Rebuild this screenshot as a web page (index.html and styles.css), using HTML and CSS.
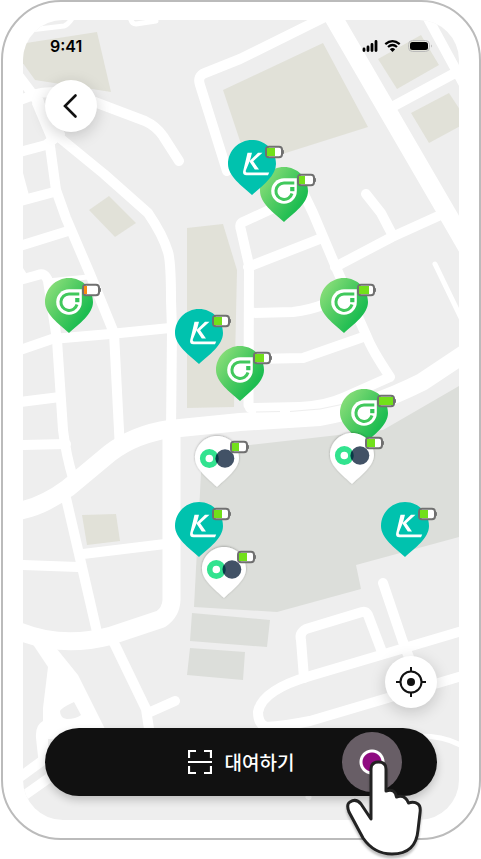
FILE: index.html
```html
<!DOCTYPE html>
<html lang="ko">
<head>
<meta charset="utf-8">
<meta name="viewport" content="width=device-width, initial-scale=1">
<title>대여하기</title>
<link rel="stylesheet" href="styles.css">
</head>
<body>
<main class="stage">
  <div class="phone">
    <div class="screen">
      <svg class="map" viewBox="23 20 436 800" preserveAspectRatio="xMidYMid slice" aria-hidden="true">
        <defs>
          <linearGradient id="leaf" x1="0.1" y1="0.15" x2="0.8" y2="0.7">
            <stop offset="0" stop-color="#86dd78"/>
            <stop offset="0.5" stop-color="#50cb62"/>
            <stop offset="1" stop-color="#1dbd51"/>
          </linearGradient>
          <filter id="soft" x="-20%" y="-20%" width="140%" height="140%">
            <feDropShadow dx="0" dy="-0.500" stdDeviation="1" flood-color="#000" flood-opacity="0.3"/>
          </filter>
          <path id="drop" d="M24 0C37.3 0 48 10.7 48 24C48 36 34 46 24 55C14 46 0 36 0 24C0 10.700 10.700 0 24 0Z"/>
          <g id="pin-k">
            <use href="#drop" fill="#00c2ae"/>
            <path fill="#fff" d="M19.500 12.700H24L22 20.500L17.800 30.500Q17.400 32.600 19 32.600H41.200L40 35.200H18.500Q14.300 35.200 15.200 31Z"/>
            <path fill="#fff" d="M30 12.700H34.500L25.200 21.300L31 29.500H26.800L21.300 21.300Z"/>
          </g>
          <g id="pin-g">
            <use href="#drop" fill="url(#leaf)"/>
            <path fill="#fff" d="M36.800 11.200H24A12.800 12.800 0 1 0 36.800 24Z"/>
            <path class="swirl" d="M34.300 16H24A8.200 8.200 0 1 0 32 26.500"/>
            <rect x="30.200" y="20" width="4.200" height="4.200" fill="#35c458"/>
          </g>
          <g id="pin-w">
            <path fill="#fff" filter="url(#soft)" d="M22 0C34.200 0 44 9.800 44 22C44 33 31 42.500 22 51C13 42.500 0 33 0 22C0 9.800 9.800 0 22 0Z"/>
            <circle cx="14.300" cy="22.500" r="6.600" fill="none" stroke="#32e38f" stroke-width="5.600"/>
            <circle cx="30" cy="22.500" r="9.300" fill="#425266"/>
            <path fill="#073b46" d="M22.100 17.500A9.300 9.300 0 0 1 22.100 27.500A9.300 9.300 0 0 1 22.100 17.500Z"/>
          </g>
          <g id="cell">
            <path d="M17 3.200Q18.500 3.500 18.500 6Q18.500 8.500 17 8.800Z" fill="#707070" stroke="#707070"/>
            <rect x="1" y="0.800" width="16" height="10.400" rx="3" fill="#fff" stroke="#707070" stroke-width="2"/>
          </g>
        </defs>

        <rect x="23" y="20" width="436" height="800" fill="#eee"/>

        <g fill="#e1e1d8">
          <path d="M20 44L97 32L111 92L35 80L20 59Z"/>
          <path d="M323 43L368 127L248 165L223 90Z"/>
          <path d="M421 35L439 65L397 89L378 59Z"/>
          <path d="M449 93L468 122L429 143L411 113Z"/>
          <path d="M109 196L136 223L115 237L89 210Z"/>
          <path d="M187 228L223 224L237 270L234 407L187 408Z"/>
          <path d="M82 515L116 514L120 541L87 545Z"/>
        </g>
        <g fill="#dcdeda">
          <path d="M459 386L383 430L250 445L202 450L201 473L194 607L277 612L361 589L356 565L459 537Z"/>
          <path d="M192 613L270 620L267 647L190 641Z"/>
          <path d="M190 648L245 652L243 680L187 675Z"/>
        </g>

        <g class="road highway">
          <path d="M325 3L447 213L480 270"/>
          <path d="M18 511Q42 507 68 488L110 453Q135 434 170 429L240 422L320 417Q370 408 422 382L470 350"/>
          <path d="M171.500 428V600Q171 612 161 619L110 636Q60 649 16 630"/>
        </g>
        <g class="road street">
          <path d="M335 12L240 59L205 73Q197 76 200 85L227 171"/>
          <path d="M424 11L455 68L470 96M392 107L455 73"/>
          <path d="M18 75L34 96L60 138L104 174L148 213Q163 235 168 252Q171 262 171 300L172 330L171 430"/>
          <path d="M20 100L36 94Q60 88 100 104L145 121Q156 126 163 136L179 161"/>
          <path d="M20 152L46 145L60 134M50 146L56 190L66 218L90 274L114 333L120 450"/>
          <path d="M20 201L54 192M20 246L68 231M20 280L38 275Q45 272 48 281L57 340L63 430Q66 455 73 478"/>
          <path d="M20 350L52 339L110 334L170 328M20 402L60 397M20 445L66 444M20 565L78 567M83 554L165 544"/>
          <path d="M66 498L79 554L97 632M112 640L115 645L146 709Q147 716 150 735M148 713L175 701"/>
          <path d="M280 205L243 222Q239 224 241 230L249 265L248.500 405M248 267L322 238"/>
          <path d="M300 186L313 213L338 272L367 337Q372 350 390 377L345 397Q325 406 300 407L250 408"/>
          <path d="M366 194L381 213L393 236M335 267L392 237L445 213"/>
          <path d="M250 313L293 312Q310 310 325 304M250 359L303 358L366 336"/>
          <path d="M383 583L403 642L412 665M462 631L310 676Q262 690 258 712Q258 724 266 727Q285 726 310 721L462 676"/>
          <path d="M304 678L301 640Q299 633 306 629L362 612Q366 611 368 615L382 652"/>
          <path d="M20 777L42 761M22 797L56 773"/>
        </g>
        <g class="road lane">
          <path d="M30 30L64 26Q68 25 73 17M130 16Q131 24 136 24L156 21"/>
          <path d="M48 281L88 277M435 264L462 320M420 736Q445 736 462 746M308 797L309 797.500"/>
        </g>
        <path class="median" d="M256 412L280 411.500M290 411.500L320 409L344 404"/>
        <g fill="#fff">
          <path d="M36 96L43 98L54 135L48 142L32 104Z"/>
          <path d="M23 173L30 199L23 205ZM23 268L28 276L23 280Z"/>
          <path fill-rule="evenodd" d="M30 640L48 667L43 708V721Q35 725 36 738L39 765L48 765V739H110L78 675L57 649ZM60 711Q61 708 74 702L81 715Q76 719 67 719Q60 718 60 711Z"/>
        </g>

        <use href="#pin-g" x="260" y="167"/>
        <use href="#pin-k" x="228" y="140"/>
        <use href="#pin-g" x="45" y="278"/>
        <use href="#pin-g" x="320" y="278"/>
        <use href="#pin-k" x="175" y="309"/>
        <use href="#pin-g" x="216" y="346"/>
        <use href="#pin-g" x="340" y="389"/>
        <use href="#pin-w" x="195" y="436"/>
        <use href="#pin-w" x="330" y="433"/>
        <use href="#pin-w" x="202" y="547"/>
        <use href="#pin-k" x="175" y="502"/>
        <use href="#pin-k" x="381" y="502"/>

        <g>
          <use href="#cell" x="265" y="146"/>
          <use href="#cell" x="297" y="174"/>
          <use href="#cell" x="82" y="284"/>
          <use href="#cell" x="357" y="284"/>
          <use href="#cell" x="212" y="315"/>
          <use href="#cell" x="253" y="352"/>
          <use href="#cell" x="377" y="395"/>
          <use href="#cell" x="230" y="441"/>
          <use href="#cell" x="365" y="437"/>
          <use href="#cell" x="212" y="508"/>
          <use href="#cell" x="418" y="508"/>
          <use href="#cell" x="237" y="551"/>
        </g>
        <path fill="#72e01a" d="M267 148h8v8h-8zM299 176h6v8h-6zM359 286h10v8h-10zM214 317h8v8h-8zM255 354h9v8h-9zM379 397h14v8h-14zM232 443h7v8h-7zM367 439h8v8h-8zM214 510h8v8h-8zM420 510h8v8h-8zM239 553h8v8h-8z"/>
        <path fill="#fa8a10" d="M84 286h3v8h-3z"/>
      </svg>

      <div class="overlay">
        <header class="status">
          <span class="clock">9:41</span>
          <svg class="signals" viewBox="0 0 70 14" width="70" height="14" aria-hidden="true">
            <path d="M2 10v1.500M6 8v3.500M10 5.500v6M14 2.500v9" stroke="#000" stroke-width="2.800" stroke-linecap="round"/>
            <g fill="none" stroke="#000" stroke-width="2.200">
              <path d="M23.300 5.200Q30.500 -1 37.700 5.200M26 8Q30.500 4 35 8"/>
            </g>
            <path d="M30.500 13L27.800 10.200Q30.500 8 33.200 10.200Z"/>
            <rect x="46.500" y="1.500" width="21" height="11" rx="4" fill="none" stroke="#bbb"/>
            <rect x="48" y="3" width="18" height="8" rx="2.500"/>
            <path d="M69 5.500Q70.500 7 69 8.500Z" fill="#aaa"/>
          </svg>
        </header>
        <button class="round" type="button" aria-label="뒤로">
          <svg viewBox="0 0 24 26" width="24" height="26" aria-hidden="true">
            <path d="M16.500 2.500L6 13L16.500 23.500" fill="none" stroke="#111" stroke-width="2.600" stroke-linecap="round"/>
          </svg>
        </button>
        <div class="actions">
          <button class="round locate" type="button" aria-label="현재 위치">
            <svg viewBox="0 0 32 32" width="32" height="32" aria-hidden="true">
              <g fill="none" stroke="#111" stroke-width="2">
                <circle cx="16" cy="16" r="10.500"/>
                <path d="M16 1v5M16 26v5M1 16h5M26 16h5"/>
              </g>
              <circle cx="16" cy="16" r="4" fill="#111"/>
            </svg>
          </button>
          <div class="rent-area">
            <button class="rent" type="button">
              <svg viewBox="0 0 24 24" width="24" height="24" aria-hidden="true">
                <path d="M1 8V1H8M16 1H23V8M23 16V23H16M8 23H1V16M0 12H24" fill="none" stroke="#fff" stroke-width="2.200"/>
              </svg>
              <span>대여하기</span>
            </button>
            <div class="tap" aria-hidden="true">
              <svg class="hand" viewBox="342 756 86 106" width="86" height="106">
                <path d="M371 819V769Q371 762 378.500 762Q386 762 386 769V791Q395 788 396.500 797Q405 794 408.500 803Q414 801 418 804Q421 806 420 813L418 830Q416 854 392 854Q374 854 363 838L349 812Q346 804 350 802Q356 798 361 804Z"/>
              </svg>
            </div>
          </div>
        </div>
      </div>
    </div>
  </div>
</main>
</body>
</html>
```

FILE: styles.css
```css
* {
  box-sizing: border-box;
}

body {
  margin: 0;
  background: #fff;
  font-family: Inter, "Noto Sans CJK KR", sans-serif;
}

.stage {
  padding: 0 0 19px 1px;
}

.phone {
  padding: 18px 20px;
  border: 2px solid #bbb;
  border-radius: 60px;
  background: #fff;
}

.screen {
  display: grid;
  aspect-ratio: 109 / 200;
}

.map,
.overlay {
  grid-area: 1 / 1;
}

.map {
  width: 100%;
  height: 100%;
  border-radius: 40px;
}

.road {
  fill: none;
  stroke: #fff;
  stroke-linecap: round;
  stroke-linejoin: round;
}

.highway {
  stroke-width: 18px;
}

.street {
  stroke-width: 10px;
}

.lane {
  stroke-width: 5px;
}

.median {
  fill: none;
  stroke: #eee;
  stroke-width: 1px;
}

.swirl {
  fill: none;
  stroke: #41c85c;
  stroke-width: 3px;
}

.overlay {
  display: flex;
  flex-direction: column;
  align-items: flex-start;
  padding: 16px 22px 24px;
  position: relative;
}

.status {
  display: flex;
  justify-content: space-between;
  align-items: center;
  align-self: stretch;
  height: 20px;
  margin-bottom: 24px;
  padding: 0 5px;
}

.clock {
  font-size: 16px;
  line-height: 20px;
  font-weight: 600;
  color: #000;
}

.round {
  display: flex;
  align-items: center;
  justify-content: center;
  width: 52px;
  height: 52px;
  padding: 0;
  border: 0;
  border-radius: 50%;
  background: #fff;
  box-shadow: 0 4px 16px rgba(0, 0, 0, 0.18);
}

.actions {
  display: flex;
  flex-direction: column;
  gap: 20px;
  align-self: stretch;
  margin-top: auto;
}

.locate {
  align-self: flex-end;
}

.rent-area {
  position: relative;
}

.rent {
  display: flex;
  align-items: center;
  justify-content: center;
  gap: 13px;
  width: 100%;
  height: 68px;
  padding: 0;
  border: 0;
  border-radius: 34px;
  background: #111;
  box-shadow: 0 4px 8px rgba(0, 0, 0, 0.2);
  color: #fff;
  font-family: "Noto Sans CJK KR", sans-serif;
  font-size: 19px;
  line-height: 28px;
  font-weight: 500;
}

.tap {
  position: absolute;
  top: 4px;
  right: 35px;
  width: 60px;
  height: 60px;
  border-radius: 50%;
  background: radial-gradient(circle, #8f0b81 9px, #fff 10px, #fff 12px, #685e66 13px);
}

.hand {
  position: absolute;
  top: 24px;
  left: 0;
  fill: #fff;
  stroke: #222;
  stroke-width: 3px;
  stroke-linejoin: round;
  filter: drop-shadow(0 3px 1px rgba(0, 0, 0, 0.25));
}
```
